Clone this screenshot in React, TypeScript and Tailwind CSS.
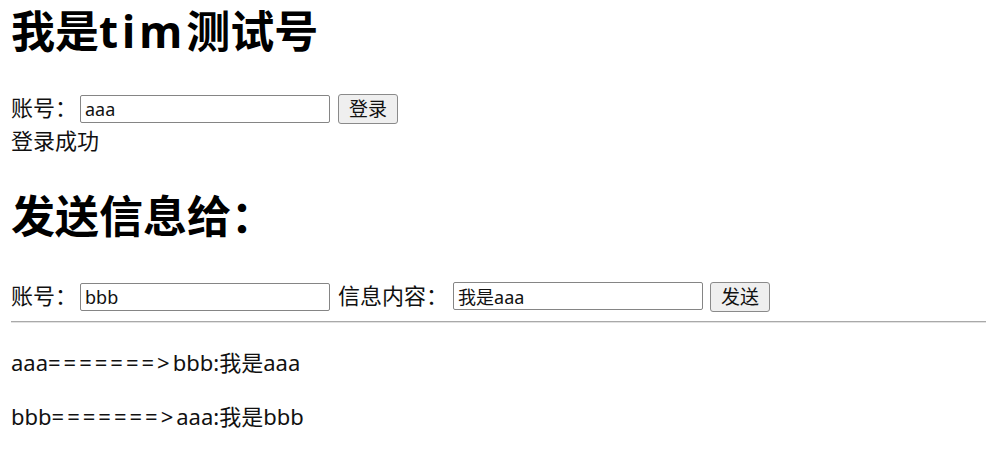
import React from 'react';

const font = { fontFamily: '"Noto Sans", "Noto Sans CJK SC", sans-serif' };

function TextInput({ value, width = 'w-[250px]' }: { value: string; width?: string }) {
  return (
    <input
      type="text"
      defaultValue={value}
      className={`${width} h-[28px] border border-[#858585] rounded-[2px] px-[4px] text-[18px] leading-[26px] text-[#111] bg-white outline-none`}
    />
  );
}

function Button({ label }: { label: string }) {
  return (
    <button className="h-[30px] w-[60px] border border-[#8a8a8a] rounded-[3px] bg-[#efefef] text-[19px] leading-[28px] text-[#111]">
      {label}
    </button>
  );
}

export default function App() {
  const messages = [
    { from: 'aaa', to: 'bbb', text: '我是aaa' },
    { from: 'bbb', to: 'aaa', text: '我是bbb' },
  ];

  return (
    <div className="w-[986px] h-[449px] bg-white text-[#111] overflow-hidden" style={font}>
      <div className="flex flex-col pl-[11px]">
        <h1 className="mt-[2px] h-[58px] text-[44px] leading-[58px] font-bold text-black">
          我是<span className="tracking-[4px]">tim</span>测试号
        </h1>

        <div className="mt-[32px] h-[30px] flex items-center text-[22px]">
          <span>账号：</span>
          <span className="ml-[3px]"><TextInput value="aaa" /></span>
          <span className="ml-[8px]"><Button label="登录" /></span>
        </div>

        <div className="mt-[3px] text-[22px] leading-[30px]">登录成功</div>

        <h1 className="mt-[32px] h-[58px] text-[44px] leading-[58px] font-bold text-black">发送信息给：</h1>

        <div className="mt-[35px] h-[30px] flex items-center text-[22px]">
          <span>账号：</span>
          <span className="ml-[3px]"><TextInput value="bbb" /></span>
          <span className="ml-[8px]">信息内容：</span>
          <span className="ml-[5px]"><TextInput value="我是aaa" /></span>
          <span className="ml-[7px]"><Button label="发送" /></span>
        </div>

        <div className="mt-[11px] h-[2px] border-t border-t-[#a9a9a9] border-b border-b-[#e2e2e2]" />

        {messages.map((m, i) => (
          <p key={i} className="mt-[24px] text-[22px] leading-[30px]">
            {m.from}
            <span className="tracking-[3px]">=======&gt;</span>
            {m.to}:{m.text}
          </p>
        ))}
      </div>
    </div>
  );
}
